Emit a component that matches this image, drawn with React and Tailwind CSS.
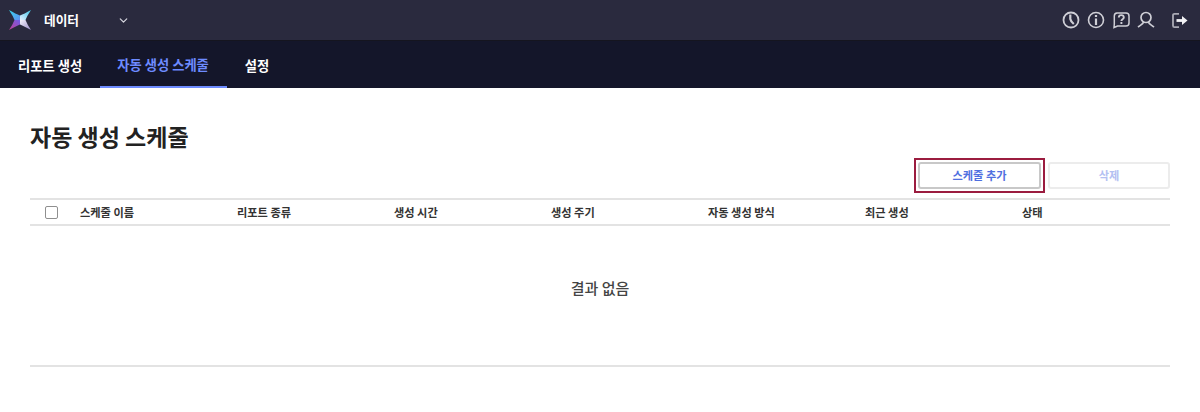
import { ChevronDown } from 'lucide-react';

const columns = ['스케줄 이름', '리포트 종류', '생성 시간', '생성 주기', '자동 생성 방식', '최근 생성', '상태'];

const Logo = () => (
  <svg width="22" height="20" viewBox="0 0 22 20" className="shrink-0">
    <defs>
      <linearGradient id="logoTL" x1="0" y1="0" x2="1" y2="1">
        <stop offset="0" stopColor="#35d6ee" />
        <stop offset="1" stopColor="#5f8ff0" />
      </linearGradient>
      <linearGradient id="logoTR" x1="1" y1="0" x2="0" y2="1">
        <stop offset="0" stopColor="#3cc6ea" />
        <stop offset="1" stopColor="#e6f0ff" />
      </linearGradient>
      <linearGradient id="logoBR" x1="1" y1="1" x2="0" y2="0">
        <stop offset="0" stopColor="#9a8cc8" />
        <stop offset="1" stopColor="#f4f2fc" />
      </linearGradient>
      <linearGradient id="logoBL" x1="0" y1="1" x2="1" y2="0">
        <stop offset="0" stopColor="#c23f95" />
        <stop offset="1" stopColor="#6f5ce6" />
      </linearGradient>
    </defs>
    <path d="M0 0Q7 4 11 5.500V10H5.500Q4 6 0 0Z" fill="url(#logoTL)" />
    <path d="M22 0Q15 4 11 5.500V10H16.500Q18 6 22 0Z" fill="url(#logoTR)" />
    <path d="M22 20Q15 16 11 14.500V10H16.500Q18 14 22 20Z" fill="url(#logoBR)" />
    <path d="M0 20Q7 16 11 14.500V10H5.500Q4 14 0 20Z" fill="url(#logoBL)" />
  </svg>
);

const TopIcons = () => (
  <div className="flex items-center text-[#cfcfd6]">
    <svg width="20" height="20" viewBox="0 0 20 20" fill="none" stroke="currentColor" className="mr-[5px]">
      <circle cx="10" cy="10" r="7.500" strokeWidth="1.800" />
      <path d="M9.300 4.500v4.500q.5 2.500 3.500 5" strokeWidth="2.200" />
    </svg>
    <svg width="20" height="20" viewBox="0 0 20 20" fill="none" stroke="currentColor" className="mr-[5px]">
      <circle cx="10" cy="10" r="7.500" strokeWidth="1.600" />
      <path d="M10 8.500V15M10 5v2" strokeWidth="2.200" />
    </svg>
    <svg width="20" height="20" viewBox="0 0 20 20" fill="none" stroke="currentColor" className="mr-[5px]">
      <path d="M6 3h9a3 3 0 0 1 3 3v7a3 3 0 0 1-3 3H6.500l-3.500 1.500.3-3.500V6a3 3 0 0 1 2.700-3Z" strokeWidth="1.500" />
      <path d="M7.800 7.500c0-3.200 5-3.200 5 0 0 1.800-2.400 1.800-2.400 3.500M10.400 12v2" strokeWidth="1.900" />
    </svg>
    <svg width="20" height="20" viewBox="0 0 20 20" fill="none" stroke="currentColor" className="mr-[13px]">
      <circle cx="10" cy="7.500" r="5" strokeWidth="1.700" />
      <path d="M7.500 12c0 2-3 3-5.500 5M12.500 12c0 2 3 3 5.500 5" strokeWidth="1.700" />
    </svg>
    <svg width="20" height="20" viewBox="0 0 20 20" fill="none">
      <path d="M10 3.800H5.500A1.500 1.500 0 0 0 4 5.300v10.400A1.500 1.500 0 0 0 5.500 17.200H10" stroke="#a9a9b4" strokeWidth="1.800" />
      <path d="M7.500 10.500h6" stroke="#f2f2f5" strokeWidth="2.800" />
      <path d="M13 6l5.500 4.500-5.500 4.500Z" fill="#f2f2f5" />
    </svg>
  </div>
);

export default function App() {
  return (
    <div className="w-[1200px] h-[412px] overflow-hidden bg-white font-['Noto_Sans_CJK_KR','Noto_Sans',sans-serif] text-[#222]">
      <header className="h-[41px] flex items-center bg-[#2a2a3e] pl-[9px] pr-[11px] border-b border-[#15151f]">
        <Logo />
        <span className="ml-[13px] text-[12.700px] font-bold text-white">데이터</span>
        <ChevronDown size={13} strokeWidth={2.2} className="ml-[38px] text-[#d8d8e0]" />
        <div className="ml-auto">
          <TopIcons />
        </div>
      </header>

      <nav className="h-[47px] flex items-stretch bg-[#14162a] pl-[18px] text-[13.300px] font-bold text-white">
        <a className="flex items-center pt-[2px]">리포트 생성</a>
        <a className="flex items-center ml-[18px] pl-[17px] pr-[18px] pt-[2px] text-[#6d8bff] border-b-2 border-[#6d8bff]">자동 생성 스케줄</a>
        <a className="flex items-center ml-[18px] pt-[2px]">설정</a>
      </nav>

      <main className="px-[30px]">
        <h1 className="mt-[32px] text-[23px] leading-[32px] font-bold text-[#222]">자동 생성 스케줄</h1>

        <div className="mt-[6px] flex justify-end gap-[3px]">
          <div className="border-2 border-[#9b1c3f] p-[2px]">
            <button type="button" className="block w-[123px] h-[27px] rounded-[3px] border-2 border-[#c8c8c8] bg-white text-[11.200px] font-bold text-[#4f6fe0]">
              스케줄 추가
            </button>
          </div>
          <button type="button" className="self-center w-[122px] h-[27px] rounded-[3px] border-2 border-[#ececec] bg-white text-[11.200px] font-bold text-[#b3c0f2]">
            삭제
          </button>
        </div>

        <div className="mt-[5px] h-[28px] flex items-center border-y-2 border-[#e3e3e3] text-[11.200px] font-bold text-[#333]">
          <span className="shrink-0 ml-[15px] mr-[22px] w-[13px] h-[13px] rounded-[2px] border border-[#8f8f8f] bg-white" />
          {columns.map((label, i) => (
            <span key={label} className={i === columns.length - 1 ? 'flex-1' : 'shrink-0 w-[157px]'}>{label}</span>
          ))}
        </div>

        <div className="h-[141px] flex items-start justify-center pt-[51px] border-b-2 border-[#e3e3e3] text-[15px] font-medium text-[#444]">
          결과 없음
        </div>
      </main>
    </div>
  );
}
